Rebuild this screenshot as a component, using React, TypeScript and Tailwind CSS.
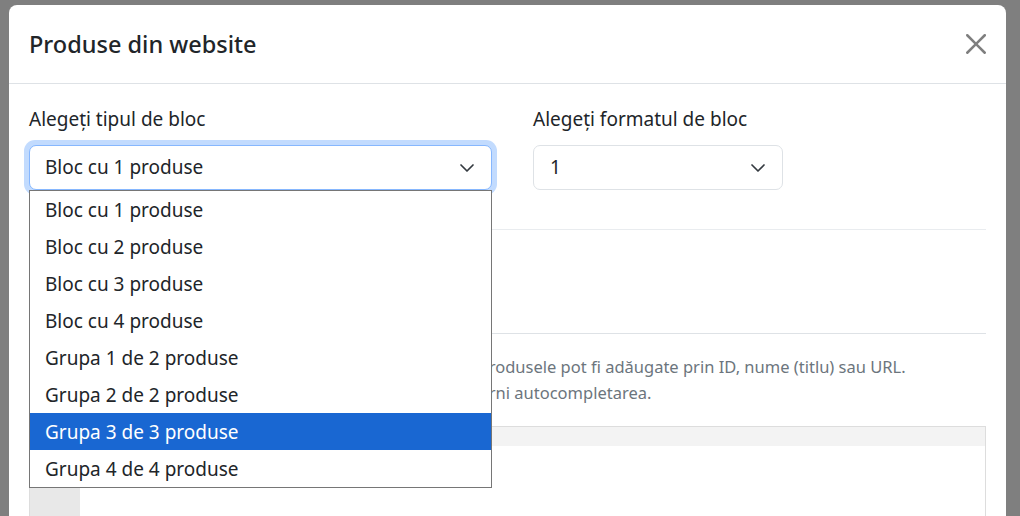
import React from "react";

const blockTypes = [
  "Bloc cu 1 produse",
  "Bloc cu 2 produse",
  "Bloc cu 3 produse",
  "Bloc cu 4 produse",
  "Grupa 1 de 2 produse",
  "Grupa 2 de 2 produse",
  "Grupa 3 de 3 produse",
  "Grupa 4 de 4 produse",
];

function Chevron() {
  return (
    <svg viewBox="0 0 16 16" className="w-[16px] h-[16px]" fill="none">
      <path
        d="m2 5 6 6 6-6"
        stroke="#343a40"
        strokeWidth="1.7"
        strokeLinecap="round"
        strokeLinejoin="round"
      />
    </svg>
  );
}

function CloseIcon() {
  return (
    <svg viewBox="0 0 16 16" className="w-[20px] h-[20px]" fill="#000" opacity={0.5}>
      <path d="M.293.293a1 1 0 0 1 1.414 0L8 6.586 14.293.293a1 1 0 1 1 1.414 1.414L9.414 8l6.293 6.293a1 1 0 0 1-1.414 1.414L8 9.414l-6.293 6.293a1 1 0 0 1-1.414-1.414L6.586 8 .293 1.707a1 1 0 0 1 0-1.414z" />
    </svg>
  );
}

export default function App() {
  const selected = 6;
  return (
    <div
      className="h-[516px] overflow-hidden bg-[#7f7f7f] pt-[5px] pl-[9px] text-[#212529]"
      style={{ fontFamily: '"Segoe UI", "Noto Sans", sans-serif' }}
    >
      <div className="w-[997px] h-[600px] bg-white rounded-t-[8px]">
        {/* header */}
        <div className="h-[79px] px-[20px] flex items-center justify-between border-b border-[#dee2e6]">
          <h5 className="text-[23.5px] leading-[37px] font-medium">Produse din website</h5>
          <button className="w-[20px] h-[20px] flex items-center justify-center">
            <CloseIcon />
          </button>
        </div>

        {/* body */}
        <div className="px-[20px] pt-[20px]">
          <div className="flex">
            <div className="w-[463px]">
              <label className="block text-[19px] leading-[30px] mb-[11px]">Alegeți tipul de bloc</label>
              <div className="relative">
                <div className="absolute -inset-[5px] rounded-[11px] bg-[#c2dbfe]" />
                <div className="relative h-[45px] border border-[#86b7fe] rounded-[7px] bg-white pl-[15px] pr-[16px] flex items-center justify-between text-[19px]">
                  <span>Bloc cu 1 produse</span>
                  <Chevron />
                </div>
                {/* open option list */}
                <div className="absolute left-0 top-[45px] w-[463px] z-10 bg-white border border-[#767676]">
                  {blockTypes.map((t, i) => (
                    <div
                      key={t}
                      className={
                        "h-[37px] pl-[15px] pt-[2px] flex items-center text-[19px] " +
                        (i === selected ? "bg-[#1967d2] text-white" : "")
                      }
                    >
                      {t}
                    </div>
                  ))}
                </div>
              </div>
            </div>
            <div className="ml-[41px] w-[250px]">
              <label className="block text-[19px] leading-[30px] mb-[11px]">Alegeți formatul de bloc</label>
              <div className="h-[45px] border border-[#dee2e6] rounded-[7px] bg-white pl-[16px] pr-[16px] flex items-center justify-between text-[19px]">
                <span>1</span>
                <Chevron />
              </div>
            </div>
          </div>

          <div className="mt-[39px] h-[105px] border-t border-b border-t-[#e9ecef] border-b-[#dee2e6]" />

          <div className="mt-[20px] text-[16.5px] leading-[26px] text-[#6c757d]">
            <div>Introduceți câte un produs pe fiecare linie, fără delimitări. Produsele pot fi adăugate prin ID, nume (titlu) sau URL.</div>
            <div>Scrieți minim 3 caractere din numele articolului pentru a porni autocompletarea.</div>
          </div>

          {/* product list editor */}
          <div className="mt-[20px] border border-[#dddddd] h-[200px] flex flex-col">
            <div className="h-[19px] bg-[#f3f3f3]" />
            <div className="flex-1 flex">
              <div className="w-[50px] bg-[#e8e8e8]" />
              <div className="flex-1 bg-white" />
            </div>
          </div>
        </div>
      </div>
    </div>
  );
}
